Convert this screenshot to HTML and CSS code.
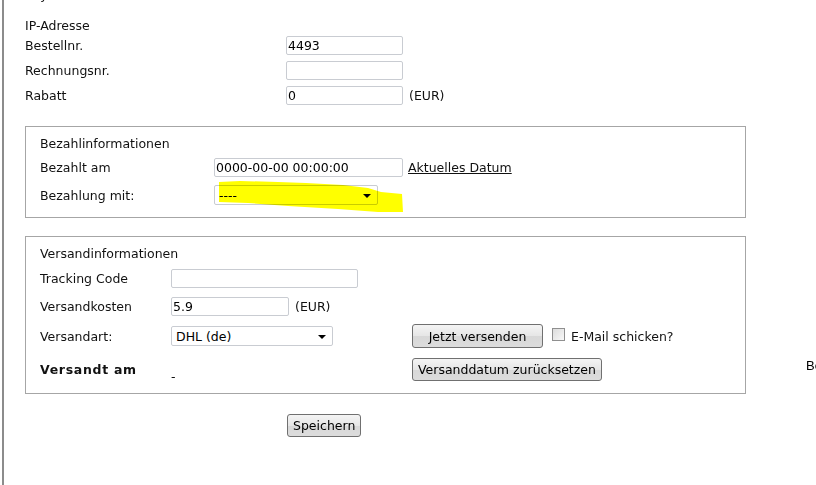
FILE: index.html
```html
<!DOCTYPE html>
<html lang="de">
<head>
    <meta charset="UTF-8">
    <title>Bestellung bearbeiten</title>
    <link rel="stylesheet" href="styles.css">
</head>
<body>
    <div class="page">
        <main class="order">
            <h3 class="cut-title">Key</h3>

            <div class="rows">
                <div class="row row-plain">
                    <span class="label">IP-Adresse</span>
                </div>
                <div class="row">
                    <span class="label">Bestellnr.</span>
                    <input class="field field-short" type="text" value="4493">
                </div>
                <div class="row">
                    <span class="label">Rechnungsnr.</span>
                    <input class="field field-short" type="text" value="">
                </div>
                <div class="row">
                    <span class="label">Rabatt</span>
                    <input class="field field-short" type="text" value="0">
                    <span class="unit">(EUR)</span>
                </div>
            </div>

            <section class="box box-pay">
                <div class="box-title">Bezahlinformationen</div>
                <div class="row">
                    <span class="label">Bezahlt am</span>
                    <input class="field field-date" type="text" value="0000-00-00 00:00:00">
                    <a class="now-link" href="#">Aktuelles Datum</a>
                </div>
                <div class="row">
                    <span class="label">Bezahlung mit:</span>
                    <span class="marked">
                        <span class="select select-pay">----<i class="arrow"></i></span>
                        <svg class="marker" width="190" height="34" viewBox="0 0 190 34">
                            <polygon points="1,1 22,0 60,1 88,2 125,4 150,7 163,11 184,13 185,31 160,31 120,28 70,25 30,22 1,21"/>
                        </svg>
                    </span>
                </div>
            </section>

            <section class="box box-ship">
                <div class="box-title">Versandinformationen</div>
                <div class="ship-grid">
                    <span class="label">Tracking Code</span>
                    <span class="cell"><input class="field field-track" type="text" value=""></span>
                    <span></span>

                    <span class="label">Versandkosten</span>
                    <span class="cell"><input class="field field-cost" type="text" value="5.9"><span class="unit">(EUR)</span></span>
                    <span></span>

                    <span class="label">Versandart:</span>
                    <span class="cell"><span class="select select-ship">DHL (de)<i class="arrow"></i></span></span>
                    <span class="cell">
                        <button class="btn btn-send" type="button">Jetzt versenden</button>
                        <label class="mail"><span class="check"></span>E-Mail schicken?</label>
                    </span>

                    <span class="label label-bold">Versandt am</span>
                    <span class="cell dash">-</span>
                    <span class="cell">
                        <button class="btn" type="button">Versanddatum zurücksetzen</button>
                    </span>
                </div>
            </section>

            <div class="save">
                <button class="btn" type="button">Speichern</button>
            </div>
        </main>

        <aside class="side">Bemerkungen</aside>
    </div>
</body>
</html>
```

FILE: styles.css
```css
html, body {
    margin: 0;
    padding: 0;
    background: #fff;
    overflow: hidden;
}

body {
    font-family: "DejaVu Sans", Verdana, sans-serif;
    font-size: 12.5px;
    color: #111;
}

.page {
    display: flex;
    margin-left: 2px;
    border-left: 2px solid #8c8c8c;
    min-height: 485px;
    padding-left: 21px;
}

.order {
    width: 721px;
}

.cut-title {
    margin: -14px 0 0;
    height: 32px;
    line-height: 18px;
    font-size: 12.5px;
    font-weight: normal;
    padding-left: 0;
}

/* plain label / input rows at the top */
.row {
    display: flex;
    align-items: center;
    height: 25px;
}

.row-plain {
    height: 15px;
}

.rows .label {
    width: 261px;
}

.field {
    box-sizing: border-box;
    height: 19px;
    border: 1px solid #c9ccd2;
    border-radius: 2px;
    padding: 0 1px;
    font: inherit;
    color: #000;
    background: #fff;
}

.field-short { width: 117px; }
.field-date  { width: 189px; }
.field-track { width: 187px; }
.field-cost  { width: 118px; }

.unit {
    margin-left: 6px;
}

/* framed groups */
.box {
    border: 1px solid #a6a6a6;
    padding: 8px 14px 0;
    box-sizing: border-box;
    width: 721px;
}

.box-pay {
    margin-top: 18px;
    height: 92px;
}

.box-ship {
    margin-top: 18px;
    height: 158px;
}

.box-title {
    height: 18px;
    line-height: 18px;
}

.box-pay .row {
    height: 28px;
}

.box-pay .label {
    width: 174px;
}

.now-link {
    color: #111;
    margin-left: 5px;
}

.select {
    position: relative;
    box-sizing: border-box;
    display: inline-flex;
    align-items: center;
    height: 20px;
    border: 1px solid #c9ccd2;
    border-radius: 2px;
    padding: 0 4px;
    background: #fff;
    color: #000;
}

.select-pay  { width: 164px; }
.select-ship { width: 162px; }

.arrow {
    position: absolute;
    right: 6px;
    top: 8px;
    border-left: 4px solid transparent;
    border-right: 4px solid transparent;
    border-top: 4px solid #000;
}

/* yellow highlighter stroke over the payment select */
.marked {
    position: relative;
    display: inline-block;
}

.marker {
    position: absolute;
    left: 4px;
    top: -4px;
    fill: #ffff00;
    mix-blend-mode: multiply;
}

.ship-grid {
    display: grid;
    grid-template-columns: 131px 241px auto;
    grid-template-rows: 28px 29px 30px 37px;
    margin-top: 1px;
}

.ship-grid > * {
    display: flex;
    align-items: center;
}

.label-bold {
    font-weight: bold;
    letter-spacing: 0.7px;
}

.dash {
    padding-top: 13px;
}

.btn {
    font: inherit;
    color: #000;
    height: 23px;
    padding: 0 5px;
    border: 1px solid #707070;
    border-radius: 3px;
    background: linear-gradient(#f4f4f4, #e6e6e6 50%, #d8d8d8 51%, #dcdcdc);
}

.btn-send {
    width: 131px;
    height: 24px;
}

.mail {
    display: inline-flex;
    align-items: center;
    margin-left: 9px;
}

.check {
    width: 11px;
    height: 11px;
    border: 1px solid #8f8f8f;
    background: linear-gradient(135deg, #dcdcdc, #f8f8f8);
    margin-right: 6px;
    margin-top: -4px;
}

.save {
    margin-top: 20px;
    padding-left: 262px;
}

.side {
    margin-left: 60px;
    padding-top: 358px;
    font-family: "Liberation Sans", Arial, sans-serif;
    font-size: 13px;
    color: #000;
    white-space: nowrap;
}
```
